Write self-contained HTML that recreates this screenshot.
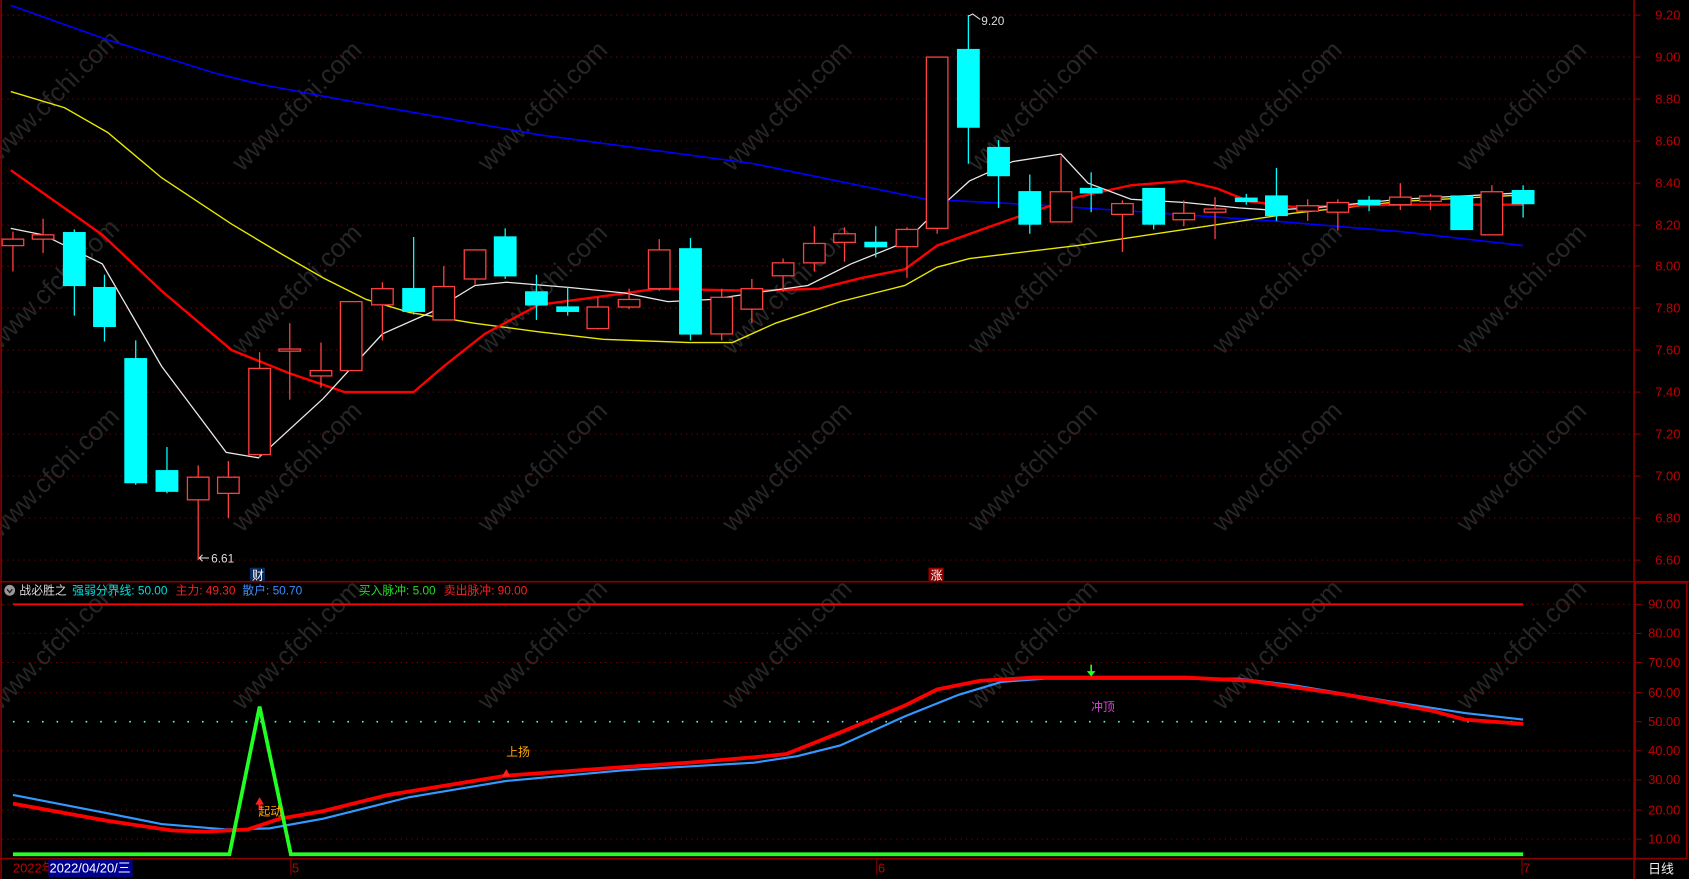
<!DOCTYPE html>
<html><head><meta charset="utf-8"><style>
html,body{margin:0;padding:0;background:#000;overflow:hidden}
svg{display:block}
text{font-family:"Liberation Sans","Noto Sans CJK SC",sans-serif}
</style></head><body>
<svg width="1689" height="879" viewBox="0 0 1568 816" preserveAspectRatio="none" xmlns="http://www.w3.org/2000/svg">
<rect width="1568" height="816" fill="#000"/>
<!-- watermarks -->
<g fill="#262626" font-size="24" font-family="Liberation Sans, sans-serif">
<text transform="translate(0,150) rotate(-45)">www.cfchi.com</text>
<text transform="translate(225,160) rotate(-45)">www.cfchi.com</text>
<text transform="translate(453,160) rotate(-45)">www.cfchi.com</text>
<text transform="translate(680,160) rotate(-45)">www.cfchi.com</text>
<text transform="translate(908,160) rotate(-45)">www.cfchi.com</text>
<text transform="translate(1135,160) rotate(-45)">www.cfchi.com</text>
<text transform="translate(1362,160) rotate(-45)">www.cfchi.com</text>
<text transform="translate(0,325) rotate(-45)">www.cfchi.com</text>
<text transform="translate(225,330) rotate(-45)">www.cfchi.com</text>
<text transform="translate(453,330) rotate(-45)">www.cfchi.com</text>
<text transform="translate(680,330) rotate(-45)">www.cfchi.com</text>
<text transform="translate(908,330) rotate(-45)">www.cfchi.com</text>
<text transform="translate(1135,330) rotate(-45)">www.cfchi.com</text>
<text transform="translate(1362,330) rotate(-45)">www.cfchi.com</text>
<text transform="translate(0,500) rotate(-45)">www.cfchi.com</text>
<text transform="translate(225,495) rotate(-45)">www.cfchi.com</text>
<text transform="translate(453,495) rotate(-45)">www.cfchi.com</text>
<text transform="translate(680,495) rotate(-45)">www.cfchi.com</text>
<text transform="translate(908,495) rotate(-45)">www.cfchi.com</text>
<text transform="translate(1135,495) rotate(-45)">www.cfchi.com</text>
<text transform="translate(1362,495) rotate(-45)">www.cfchi.com</text>
<text transform="translate(0,660) rotate(-45)">www.cfchi.com</text>
<text transform="translate(225,660) rotate(-45)">www.cfchi.com</text>
<text transform="translate(453,660) rotate(-45)">www.cfchi.com</text>
<text transform="translate(680,660) rotate(-45)">www.cfchi.com</text>
<text transform="translate(908,660) rotate(-45)">www.cfchi.com</text>
<text transform="translate(1135,660) rotate(-45)">www.cfchi.com</text>
<text transform="translate(1362,660) rotate(-45)">www.cfchi.com</text>
</g>
<!-- price grid -->
<g stroke="#8a0000" stroke-width="1" stroke-dasharray="1,4">
<line x1="2" y1="14" x2="1517" y2="14"/><line x1="2" y1="53" x2="1517" y2="53"/><line x1="2" y1="92" x2="1517" y2="92"/><line x1="2" y1="131" x2="1517" y2="131"/><line x1="2" y1="170" x2="1517" y2="170"/><line x1="2" y1="209" x2="1517" y2="209"/><line x1="2" y1="247" x2="1517" y2="247"/><line x1="2" y1="286" x2="1517" y2="286"/><line x1="2" y1="325" x2="1517" y2="325"/><line x1="2" y1="364" x2="1517" y2="364"/><line x1="2" y1="403" x2="1517" y2="403"/><line x1="2" y1="442" x2="1517" y2="442"/><line x1="2" y1="481" x2="1517" y2="481"/><line x1="2" y1="520" x2="1517" y2="520"/>
<line x1="2" y1="561" x2="1517" y2="561"/><line x1="2" y1="588" x2="1517" y2="588"/><line x1="2" y1="615" x2="1517" y2="615"/><line x1="2" y1="643" x2="1517" y2="643"/><line x1="2" y1="697" x2="1517" y2="697"/><line x1="2" y1="724" x2="1517" y2="724"/><line x1="2" y1="752" x2="1517" y2="752"/><line x1="2" y1="779" x2="1517" y2="779"/>
</g>
<line x1="12" y1="670" x2="1414" y2="670" stroke="#5fd" stroke-width="1.5" stroke-dasharray="1.5,12"/>
<!-- frame -->
<g stroke="#8a0000" fill="none" stroke-width="1.5">
<line x1="1517" y1="0" x2="1517" y2="816"/>
<line x1="0" y1="540" x2="1568" y2="540"/>
<line x1="0" y1="797" x2="1517" y2="797"/>
<line x1="1" y1="0" x2="1" y2="816"/>
<rect x="1518" y="541" width="48" height="256"/>
</g>
<g stroke="#8a0000" stroke-width="1">
<line x1="1517" y1="14" x2="1523" y2="14"/><line x1="1517" y1="53" x2="1523" y2="53"/><line x1="1517" y1="92" x2="1523" y2="92"/><line x1="1517" y1="131" x2="1523" y2="131"/><line x1="1517" y1="170" x2="1523" y2="170"/><line x1="1517" y1="209" x2="1523" y2="209"/><line x1="1517" y1="247" x2="1523" y2="247"/><line x1="1517" y1="286" x2="1523" y2="286"/><line x1="1517" y1="325" x2="1523" y2="325"/><line x1="1517" y1="364" x2="1523" y2="364"/><line x1="1517" y1="403" x2="1523" y2="403"/><line x1="1517" y1="442" x2="1523" y2="442"/><line x1="1517" y1="481" x2="1523" y2="481"/><line x1="1517" y1="520" x2="1523" y2="520"/>
<line x1="1518" y1="561" x2="1524" y2="561"/><line x1="1518" y1="588" x2="1524" y2="588"/><line x1="1518" y1="615" x2="1524" y2="615"/><line x1="1518" y1="643" x2="1524" y2="643"/><line x1="1518" y1="670" x2="1524" y2="670"/><line x1="1518" y1="697" x2="1524" y2="697"/><line x1="1518" y1="724" x2="1524" y2="724"/><line x1="1518" y1="752" x2="1524" y2="752"/><line x1="1518" y1="779" x2="1524" y2="779"/>
<line x1="270" y1="797" x2="270" y2="812"/><line x1="814" y1="797" x2="814" y2="812"/><line x1="1413" y1="797" x2="1413" y2="812"/>
</g>
<!-- price axis labels -->
<g fill="#c00000" font-size="12" text-anchor="end">
<text x="1560" y="18">9.20</text><text x="1560" y="57">9.00</text><text x="1560" y="96">8.80</text><text x="1560" y="135">8.60</text><text x="1560" y="174">8.40</text><text x="1560" y="213">8.20</text><text x="1560" y="251">8.00</text><text x="1560" y="290">7.80</text><text x="1560" y="329">7.60</text><text x="1560" y="368">7.40</text><text x="1560" y="407">7.20</text><text x="1560" y="446">7.00</text><text x="1560" y="485">6.80</text><text x="1560" y="524">6.60</text>
<text x="1560" y="565">90.00</text><text x="1560" y="592">80.00</text><text x="1560" y="619">70.00</text><text x="1560" y="647">60.00</text><text x="1560" y="674">50.00</text><text x="1560" y="701">40.00</text><text x="1560" y="728">30.00</text><text x="1560" y="756">20.00</text><text x="1560" y="783">10.00</text>
</g>
<!-- MAs -->
<polyline fill="none" stroke="#0000ff" stroke-width="1.5" points="10,5 100,37 200,68 240,78 320,93 500,125 700,152 860,185 960,190 1080,198 1180,205 1300,215 1414,228"/>
<polyline fill="none" stroke="#e8e800" stroke-width="1.3" points="10,85 60,100 100,123 150,165 215,208 260,235 300,258 340,278 380,290 440,300 500,308 560,315 640,318 680,318 720,300 780,280 840,265 870,248 900,240 1000,228 1100,213 1200,198 1300,187 1414,181"/>
<polyline fill="none" stroke="#ff0000" stroke-width="2.2" points="10,158 95,218 150,270 215,325 270,347 320,364 384,364 412,340 450,310 500,283 560,275 610,268 700,270 760,268 800,258 840,250 870,228 920,210 960,196 1000,183 1050,172 1100,168 1130,175 1160,187 1200,192 1300,190 1414,190"/>
<polyline fill="none" stroke="#e8e8e8" stroke-width="1.2" points="10,212 40,218 95,245 150,340 210,420 240,425 300,370 355,310 400,290 441,265 470,262 530,267 580,272 620,280 660,278 700,272 750,265 790,245 840,225 870,195 900,168 940,150 985,143 1010,170 1050,185 1100,188 1150,193 1180,195 1220,193 1300,185 1414,179"/>
<!-- candles -->
<g stroke="#ff4040" stroke-width="1.2" fill="#000">
<line x1="12" y1="215" x2="12" y2="252"/><rect x="2" y="222" width="20" height="6"/>
<line x1="40" y1="203" x2="40" y2="235"/><rect x="30" y="218" width="20" height="4"/>
<line x1="184" y1="432" x2="184" y2="520"/><rect x="174" y="443" width="20" height="21"/>
<line x1="212" y1="428" x2="212" y2="481"/><rect x="202" y="443" width="20" height="15"/>
<line x1="241" y1="327" x2="241" y2="425"/><rect x="231" y="342" width="20" height="80"/>
<line x1="269" y1="300" x2="269" y2="371"/><rect x="259" y="324" width="20" height="2"/>
<line x1="298" y1="318" x2="298" y2="360"/><rect x="288" y="344" width="20" height="5"/>
<rect x="316" y="280" width="20" height="64"/>
<line x1="355" y1="262" x2="355" y2="316"/><rect x="345" y="268" width="20" height="15"/>
<line x1="412" y1="247" x2="412" y2="297"/><rect x="402" y="266" width="20" height="31"/>
<line x1="441" y1="232" x2="441" y2="264"/><rect x="431" y="232" width="20" height="27"/>
<line x1="555" y1="276" x2="555" y2="306"/><rect x="545" y="285" width="20" height="20"/>
<line x1="584" y1="268" x2="584" y2="287"/><rect x="574" y="278" width="20" height="7"/>
<line x1="612" y1="222" x2="612" y2="270"/><rect x="602" y="232" width="20" height="36"/>
<line x1="670" y1="268" x2="670" y2="316"/><rect x="660" y="276" width="20" height="34"/>
<line x1="698" y1="259" x2="698" y2="300"/><rect x="688" y="268" width="20" height="19"/>
<line x1="727" y1="240" x2="727" y2="271"/><rect x="717" y="244" width="20" height="12"/>
<line x1="756" y1="210" x2="756" y2="252"/><rect x="746" y="226" width="20" height="18"/>
<line x1="784" y1="211" x2="784" y2="243"/><rect x="774" y="217" width="20" height="8"/>
<line x1="842" y1="211" x2="842" y2="258"/><rect x="832" y="213" width="20" height="16"/>
<line x1="870" y1="53" x2="870" y2="217"/><rect x="860" y="53" width="20" height="159"/>
<line x1="985" y1="145" x2="985" y2="206"/><rect x="975" y="178" width="20" height="28"/>
<line x1="1042" y1="186" x2="1042" y2="234"/><rect x="1032" y="189" width="20" height="10"/>
<line x1="1099" y1="186" x2="1099" y2="210"/><rect x="1089" y="198" width="20" height="6"/>
<line x1="1128" y1="183" x2="1128" y2="222"/><rect x="1118" y="194" width="20" height="3"/>
<line x1="1214" y1="185" x2="1214" y2="205"/><rect x="1204" y="191" width="20" height="5"/>
<line x1="1242" y1="185" x2="1242" y2="214"/><rect x="1232" y="188" width="20" height="9"/>
<line x1="1300" y1="170" x2="1300" y2="195"/><rect x="1290" y="183" width="20" height="7"/>
<line x1="1328" y1="180" x2="1328" y2="195"/><rect x="1318" y="182" width="20" height="5"/>
<line x1="1385" y1="172" x2="1385" y2="218"/><rect x="1375" y="178" width="20" height="40"/>
</g>
<g stroke="#00ffff" stroke-width="1.2" fill="#00ffff">
<line x1="69" y1="213" x2="69" y2="293"/><rect x="59" y="216" width="20" height="49"/>
<line x1="97" y1="255" x2="97" y2="317"/><rect x="87" y="267" width="20" height="36"/>
<line x1="126" y1="316" x2="126" y2="450"/><rect x="116" y="333" width="20" height="115"/>
<line x1="155" y1="415" x2="155" y2="458"/><rect x="145" y="437" width="20" height="19"/>
<line x1="384" y1="220" x2="384" y2="292"/><rect x="374" y="268" width="20" height="21"/>
<line x1="469" y1="212" x2="469" y2="259"/><rect x="459" y="220" width="20" height="36"/>
<line x1="498" y1="255" x2="498" y2="297"/><rect x="488" y="271" width="20" height="12"/>
<line x1="527" y1="266" x2="527" y2="293"/><rect x="517" y="285" width="20" height="4"/>
<line x1="641" y1="221" x2="641" y2="316"/><rect x="631" y="231" width="20" height="79"/>
<line x1="813" y1="210" x2="813" y2="239"/><rect x="803" y="225" width="20" height="4"/>
<line x1="899" y1="14" x2="899" y2="152"/><rect x="889" y="46" width="20" height="72"/>
<line x1="927" y1="130" x2="927" y2="193"/><rect x="917" y="137" width="20" height="26"/>
<line x1="956" y1="162" x2="956" y2="217"/><rect x="946" y="178" width="20" height="30"/>
<line x1="1013" y1="160" x2="1013" y2="197"/><rect x="1003" y="175" width="20" height="4"/>
<line x1="1071" y1="175" x2="1071" y2="213"/><rect x="1061" y="175" width="20" height="33"/>
<line x1="1157" y1="180" x2="1157" y2="190"/><rect x="1147" y="184" width="20" height="3"/>
<line x1="1185" y1="156" x2="1185" y2="205"/><rect x="1175" y="182" width="20" height="18"/>
<line x1="1271" y1="182" x2="1271" y2="196"/><rect x="1261" y="186" width="20" height="4"/>
<rect x="1347" y="182" width="20" height="31"/>
<line x1="1414" y1="172" x2="1414" y2="202"/><rect x="1404" y="177" width="20" height="12"/>
</g>
<!-- markers -->
<g fill="#ddd" font-size="11">
<text x="911" y="23">9.20</text>
<polyline points="899,15 903,13 910,18" fill="none" stroke="#ddd" stroke-width="1"/>
<text x="196" y="522">6.61</text>
<line x1="185" y1="518" x2="194" y2="518" stroke="#ddd"/>
<polyline points="188,515 185,518 188,521" fill="none" stroke="#ddd"/>
</g>
<rect x="232" y="527" width="14" height="12" fill="#0a2a5a"/>
<text x="234" y="538" fill="#fff" font-size="11">财</text>
<rect x="862" y="527" width="14" height="12" fill="#900"/>
<text x="864" y="538" fill="#fff" font-size="11">涨</text>
<!-- indicator header -->
<circle cx="9" cy="548" r="5" fill="#999"/>
<polyline points="6.5,547 9,550 11.5,547" fill="none" stroke="#222" stroke-width="1.3"/>
<g font-size="11">
<text x="18" y="552" fill="#ddd">战必胜之</text>
<text x="67" y="552" fill="#00e0e0">强弱分界线: 50.00</text>
<text x="163" y="552" fill="#ff2020">主力: 49.30</text>
<text x="225" y="552" fill="#3a8fff">散户: 50.70</text>
<text x="333" y="552" fill="#22dd22">买入脉冲: 5.00</text>
<text x="412" y="552" fill="#ff2020">卖出脉冲: 90.00</text>
</g>
<!-- indicator lines -->
<line x1="12" y1="561" x2="1414" y2="561" stroke="#ff0000" stroke-width="1.8"/>
<polyline fill="none" stroke="#3399ff" stroke-width="2" points="12,738 100,755 150,765 210,770 250,769 300,760 380,740 470,725 580,715 700,708 740,702 780,692 840,665 890,645 930,633 970,630 1150,630 1200,636 1290,651 1360,662 1414,668"/>
<polyline fill="none" stroke="#ff0000" stroke-width="3.5" points="12,746 100,762 160,771 190,772 230,770 260,760 300,753 360,738 470,720 580,712 640,708 700,703 730,700 780,680 840,655 870,640 910,632 960,629 1100,629 1160,632 1250,645 1330,660 1360,668 1414,672"/>
<polyline fill="none" stroke="#22ff22" stroke-width="3.5" points="12,793 213,793 241,656 270,793 1414,793"/>
<polygon points="241,740 237,747 245,747" fill="#ff2020"/><line x1="241" y1="745" x2="241" y2="752" stroke="#ff2020" stroke-width="2"/>
<text x="240" y="757" fill="#ffaa00" font-size="11">起动</text>
<polygon points="470,714 466,721 474,721" fill="#ff2020"/>
<text x="470" y="702" fill="#ffaa00" font-size="11">上扬</text>
<line x1="1013" y1="617" x2="1013" y2="624" stroke="#22ff22" stroke-width="1.5"/><polygon points="1009,623 1017,623 1013,628" fill="#22ff22"/>
<text x="1013" y="660" fill="#dd44dd" font-size="11">冲顶</text>
<!-- bottom axis -->
<text x="12" y="810" fill="#c00000" font-size="12">2022年</text>
<rect x="45" y="798" width="78" height="16" fill="#000090"/>
<text x="46" y="810" fill="#fff" font-size="12">2022/04/20/三</text>
<text x="271" y="810" fill="#c00000" font-size="12">5</text>
<text x="815" y="810" fill="#c00000" font-size="12">6</text>
<text x="1414" y="810" fill="#c00000" font-size="12">7</text>
<text x="1530" y="811" fill="#eee" font-size="12">日线</text>
</svg>
</body></html>
